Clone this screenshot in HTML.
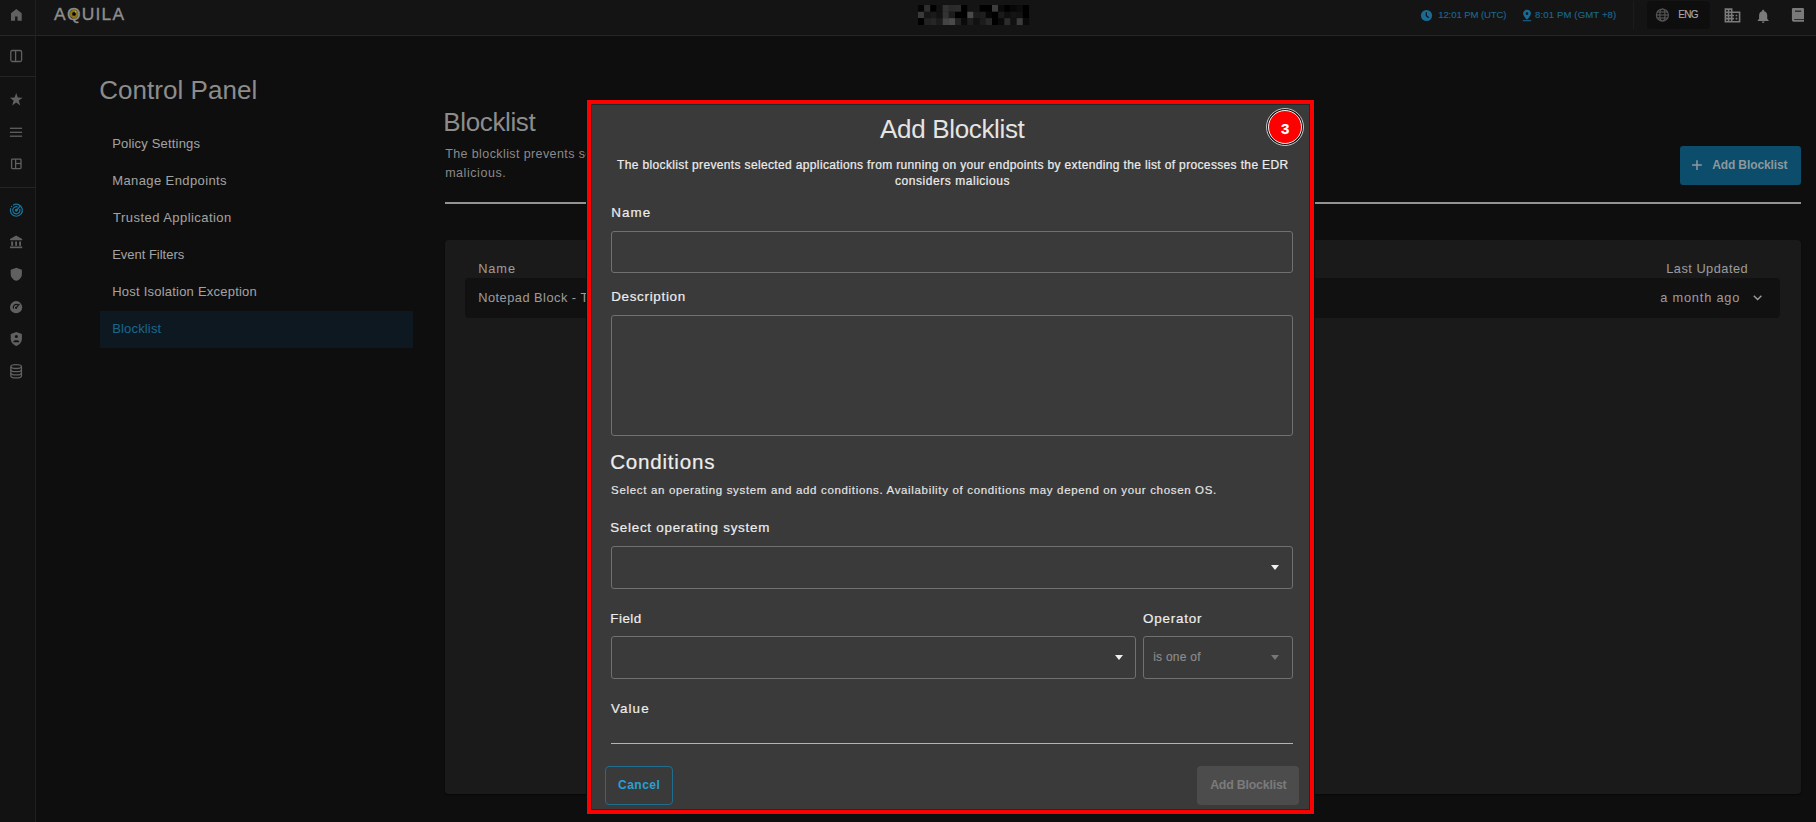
<!DOCTYPE html>
<html><head><meta charset="utf-8">
<style>
*{margin:0;padding:0;box-sizing:border-box}
html,body{width:1816px;height:822px;overflow:hidden;background:#0e0e0e;font-family:"Liberation Sans",sans-serif}
.a{position:absolute}
.t{position:absolute;white-space:nowrap;line-height:1}
#top{left:0;top:0;width:1816px;height:35px;background:#141414}
#topline{left:0;top:35px;width:1816px;height:1px;background:#262626}
#rail{left:0;top:36px;width:35px;height:786px;background:#121212}
#railline{left:35px;top:0;width:1px;height:822px;background:#202020}
.inp{border:1px solid #707070;border-radius:3px}
.caret{width:0;height:0;border-left:4.5px solid transparent;border-right:4.5px solid transparent;border-top:5px solid #f0f0f0}
.sep{left:0;width:35px;height:1px;background:#242424}
</style></head><body>
<!-- top bar -->
<div class="a" id="top"></div>
<div class="a" id="rail"></div>
<div class="a" id="topline"></div>
<div class="a" id="railline"></div>
<div class="a sep" style="top:76px"></div>
<div class="a sep" style="top:187px"></div>

<!-- logo -->

<!-- left menu -->
<div class="a" style="left:100px;top:311px;width:313px;height:37px;background:#0d1820"></div>

<!-- main -->
<div class="a" style="left:445px;top:202px;width:1356px;height:2px;background:#939393"></div>
<div class="a" style="left:1680px;top:146px;width:121px;height:39px;background:#0b4d6b;border-radius:3px"></div>

<div class="a" style="left:445px;top:240px;width:1356px;height:554px;background:#1a1a1a;border-radius:4px;box-shadow:0 1px 2px rgba(0,0,0,0.5)"></div>
<div class="a" style="left:465px;top:278px;width:1315px;height:40px;background:#111111;border-radius:4px"></div>

<div class="t" id="aq" style="left:54.05px;top:6.07px;font-size:17.4px;color:#8e8e8e;letter-spacing:1.260px;-webkit-text-stroke:0.35px #8e8e8e">AQUILA</div>
<div class="t" id="cp" style="left:99.25px;top:77.29px;font-size:26px;color:#8c8c8c;letter-spacing:0.037px">Control Panel</div>
<div class="t" id="m1" style="left:112.18px;top:136.99px;font-size:13px;color:#a2a2a2;letter-spacing:0.180px;-webkit-text-stroke:0.05px #a2a2a2">Policy Settings</div>
<div class="t" id="m2" style="left:112.21px;top:174.19px;font-size:13px;color:#a2a2a2;letter-spacing:0.396px;-webkit-text-stroke:0.05px #a2a2a2">Manage Endpoints</div>
<div class="t" id="m3" style="left:113.10px;top:211.19px;font-size:13px;color:#a2a2a2;letter-spacing:0.450px;-webkit-text-stroke:0.05px #a2a2a2">Trusted Application</div>
<div class="t" id="m4" style="left:112.18px;top:248.19px;font-size:13px;color:#a2a2a2;letter-spacing:-0.015px;-webkit-text-stroke:0.05px #a2a2a2">Event Filters</div>
<div class="t" id="m5" style="left:112.18px;top:284.99px;font-size:13px;color:#a2a2a2;letter-spacing:0.223px;-webkit-text-stroke:0.05px #a2a2a2">Host Isolation Exception</div>
<div class="t" id="m6" style="left:112.18px;top:321.99px;font-size:13px;color:#18678d;letter-spacing:0.169px;-webkit-text-stroke:0.05px #18678d">Blocklist</div>
<div class="t" id="bh" style="left:443.36px;top:109.39px;font-size:26px;color:#8c8c8c;letter-spacing:-0.383px">Blocklist</div>
<div class="t" id="d1" style="left:445.16px;top:148.32px;font-size:12.5px;color:#8a8a8a;letter-spacing:0.400px">The blocklist prevents selected applications from running on your endpoints by extending the list of processes the EDR considers</div>
<div class="t" id="d2" style="left:445.16px;top:166.62px;font-size:12.5px;color:#8a8a8a;letter-spacing:0.550px">malicious.</div>
<div class="t" id="bt" style="left:1712.14px;top:158.84px;font-size:12px;color:#8c989e;font-weight:bold;letter-spacing:-0.105px">Add Blocklist</div>
<div class="t" id="tn" style="left:478.19px;top:263.16px;font-size:12.8px;color:#9c9c9c;letter-spacing:0.900px;-webkit-text-stroke:0.05px #9c9c9c">Name</div>
<div class="t" id="tl" style="left:1666.20px;top:263.16px;font-size:12.8px;color:#9c9c9c;letter-spacing:0.491px;-webkit-text-stroke:0.05px #9c9c9c">Last Updated</div>
<div class="t" id="tr" style="left:478.19px;top:291.56px;font-size:12.8px;color:#9c9c9c;letter-spacing:0.490px;-webkit-text-stroke:0.05px #9c9c9c">Notepad Block - Test</div>
<div class="t" id="ta" style="left:1660.16px;top:291.96px;font-size:12.8px;color:#9c9c9c;letter-spacing:0.810px;-webkit-text-stroke:0.05px #9c9c9c">a month ago</div>
<!-- modal -->
<div class="a" style="left:587px;top:100px;width:727px;height:714px;border:4px solid #ff0000;background:#3a3a3a;box-shadow:0 0 0 1px #041010,inset 0 0 0 1px #1c2a2a"></div>

<div class="a inp" style="left:611px;top:231px;width:682px;height:42px"></div>
<div class="a inp" style="left:611px;top:315px;width:682px;height:121px"></div>
<div class="a inp" style="left:611px;top:546px;width:682px;height:43px"></div>
<div class="a caret" style="left:1271px;top:565px"></div>
<div class="a inp" style="left:611px;top:636px;width:525px;height:43px"></div>
<div class="a caret" style="left:1115px;top:655px"></div>
<div class="a inp" style="left:1143px;top:636px;width:150px;height:43px"></div>
<div class="a caret" style="left:1271px;top:655px;border-top-color:#777"></div>
<div class="a" style="left:611px;top:743px;width:682px;height:1px;background:#b4b4b4"></div>
<div class="a" style="left:605px;top:766px;width:68px;height:39px;border:1px solid #1f6e8f;border-radius:4px"></div>
<div class="a" style="left:1197px;top:766px;width:102px;height:39px;background:#4c4c4c;border-radius:4px"></div>
<div class="a" style="left:1266px;top:108px;width:38px;height:38px;border-radius:50%;border:1px solid #c8c8c8;background:#111"></div>
<div class="a" style="left:1268px;top:110px;width:34px;height:34px;border-radius:50%;border:1.5px solid #f2f2f2;background:#ff0000"></div>

<svg class="a" style="left:0;top:0" width="1816" height="822" viewBox="0 0 1816 822">
<g fill="#606060" stroke="none">
 <path d="M16.3 8.9 L21.7 13.3 V20.7 H17.5 V16.5 H15.1 V20.7 H11 V13.3 Z"/>
 <path d="M16.2 93 L17.8 97.6 L22.6 97.7 L18.8 100.6 L20.2 105.5 L16.2 102.6 L12.2 105.5 L13.6 100.6 L9.8 97.7 L14.6 97.6 Z"/>
 <path d="M16.1 235.4 L22.2 239 V240.3 H10 V239 Z"/>
 <rect x="11.2" y="241.5" width="1.9" height="4.3"/><rect x="15.15" y="241.5" width="1.9" height="4.3"/><rect x="19.1" y="241.5" width="1.9" height="4.3"/>
 <rect x="10" y="246.5" width="12.2" height="1.7"/>
 <path d="M16.3 267.7 L21.9 269.8 V274 C21.9 277.4 19.5 280 16.3 280.8 C13.1 280 10.7 277.4 10.7 274 V269.8 Z"/>
 <circle cx="16.1" cy="307.2" r="6.1"/>
 <path d="M16.3 332 L21.9 334.1 V338.6 C21.9 342.2 19.5 345 16.3 345.9 C13.1 345 10.7 342.2 10.7 338.6 V334.1 Z"/>
</g>
<g fill="none" stroke="#606060" stroke-width="1.3">
 <rect x="10.8" y="50.5" width="10.8" height="11" rx="1.5"/>
 <line x1="15.6" y1="50.5" x2="15.6" y2="61.5"/>
 <line x1="9.9" y1="128.3" x2="22.1" y2="128.3"/><line x1="9.9" y1="132.3" x2="22.1" y2="132.3"/><line x1="9.9" y1="136.2" x2="22.1" y2="136.2"/>
 <rect x="11.6" y="159.1" width="9.4" height="9.5" rx="0.8"/>
 <line x1="15.6" y1="159.1" x2="15.6" y2="168.6"/><line x1="15.6" y1="163.5" x2="21" y2="163.5"/>
 <ellipse cx="16.15" cy="366.6" rx="5.3" ry="1.9"/>
 <path d="M10.85 366.6 V375.9 C10.85 377 13.2 377.8 16.15 377.8 C19.1 377.8 21.45 377 21.45 375.9 V366.6"/>
 <path d="M10.85 369.8 C10.85 370.9 13.2 371.7 16.15 371.7 C19.1 371.7 21.45 370.9 21.45 369.8"/>
 <path d="M10.85 372.9 C10.85 374 13.2 374.8 16.15 374.8 C19.1 374.8 21.45 374 21.45 372.9"/>
</g>
<g fill="#121212" stroke="none">
 <circle cx="16.3" cy="336.6" r="1.5"/>
 <path d="M13.4 341.6 C13.6 339.8 19 339.8 19.2 341.6 V342.3 H13.4 Z"/>
</g>
<g stroke="#121212" stroke-width="1.2" fill="none" stroke-linecap="round">
 <path d="M13.4 308.2 A3 3 0 0 1 17.5 304.6"/>
 <line x1="16.1" y1="307.8" x2="19.2" y2="304.3"/>
</g>
<circle cx="16.1" cy="307.8" r="1.1" fill="#121212"/>
<g fill="none" stroke="#18769e" stroke-width="1.2">
 <path d="M13.09 205.22 A6 6 0 1 1 10.72 208.2"/>
 <path d="M19.74 209.02 A3.6 3.6 0 1 1 17.59 206.87"/>
 <line x1="16.36" y1="210.25" x2="20.6" y2="205.9"/>
</g>
<circle cx="11.63" cy="206.56" r="0.75" fill="#18769e"/>
<circle cx="16.36" cy="210.25" r="1.4" fill="#18769e"/>
<!-- top bar right -->
<circle cx="1426.5" cy="15.5" r="5.6" fill="#1a6a93"/>
<path d="M1426.3 12.3 V15.8 L1428.8 17.8" stroke="#141414" stroke-width="1.2" fill="none"/>
<path d="M1527 9.8 C1524.8 9.8 1523.1 11.5 1523.1 13.6 C1523.1 16.2 1527 19.8 1527 19.8 C1527 19.8 1530.9 16.2 1530.9 13.6 C1530.9 11.5 1529.2 9.8 1527 9.8 Z" fill="#1a6a93"/>
<circle cx="1527" cy="13.6" r="1.3" fill="#141414"/>
<rect x="1522.8" y="20.2" width="8.4" height="1" fill="#1a6a93"/>
<rect x="1633" y="1" width="1" height="28" fill="#1c1c1c"/>
<rect x="1647" y="1" width="63" height="28" rx="4" fill="#0e0e0e"/>
<g fill="none" stroke="#555" stroke-width="1.2">
 <circle cx="1662.4" cy="15" r="6"/>
 <ellipse cx="1662.4" cy="15" rx="2.6" ry="6"/>
 <line x1="1656.4" y1="15" x2="1668.4" y2="15"/>
 <line x1="1657.2" y1="12" x2="1667.6" y2="12"/>
 <line x1="1657.2" y1="18" x2="1667.6" y2="18"/>
</g>
<g fill="#7a7a7a">
 <path transform="translate(1723 6.0) scale(0.79)" d="M12 7V3H2v18h20V7H12zM6 19H4v-2h2v2zm0-4H4v-2h2v2zm0-4H4V9h2v2zm0-4H4V5h2v2zm4 12H8v-2h2v2zm0-4H8v-2h2v2zm0-4H8V9h2v2zm0-4H8V5h2v2zm10 12h-8v-2h2v-2h-2v-2h2v-2h-2V9h8v10zm-2-8h-2v2h2v-2zm0 4h-2v2h2v-2z"/>
 <path transform="translate(1755 8) scale(0.68)" d="M12 22c1.1 0 2-.9 2-2h-4c0 1.1.89 2 2 2zm6-6v-5c0-3.07-1.64-5.64-4.5-6.32V4c0-.83-.67-1.5-1.5-1.5s-1.5.67-1.5 1.5v.68C7.63 5.36 6 7.92 6 11v5l-2 2v1h16v-1l-2-2z"/>
 <path d="M1793.2 8 H1802.8 A1.2 1.2 0 0 1 1804 9.2 V19.2 H1794.3 A0.9 0.9 0 0 0 1794.3 20.1 H1804 V21.8 H1793.6 A1.7 1.7 0 0 1 1791.9 20.1 V9.3 A1.3 1.3 0 0 1 1793.2 8 Z"/>
</g>
<rect x="1795" y="10.6" width="6.2" height="1.1" fill="#141414"/>
<rect x="918.00" y="5" width="6.22" height="6.80" fill="#050505"/>
<rect x="924.17" y="5" width="6.22" height="6.80" fill="#2e2e2e"/>
<rect x="930.33" y="5" width="6.22" height="6.80" fill="#000000"/>
<rect x="936.50" y="5" width="6.22" height="6.80" fill="#121212"/>
<rect x="942.67" y="5" width="6.22" height="6.80" fill="#333333"/>
<rect x="948.83" y="5" width="6.22" height="6.80" fill="#2a2a2a"/>
<rect x="955.00" y="5" width="6.22" height="6.80" fill="#2c2c2c"/>
<rect x="961.17" y="5" width="6.22" height="6.80" fill="#000000"/>
<rect x="967.33" y="5" width="6.22" height="6.80" fill="#141414"/>
<rect x="973.50" y="5" width="6.22" height="6.80" fill="#141414"/>
<rect x="979.67" y="5" width="6.22" height="6.80" fill="#000000"/>
<rect x="985.83" y="5" width="6.22" height="6.80" fill="#000000"/>
<rect x="992.00" y="5" width="6.22" height="6.80" fill="#3c3c3c"/>
<rect x="998.17" y="5" width="6.22" height="6.80" fill="#0a0a0a"/>
<rect x="1004.33" y="5" width="6.22" height="6.80" fill="#000000"/>
<rect x="1010.50" y="5" width="6.22" height="6.80" fill="#070707"/>
<rect x="1016.67" y="5" width="6.22" height="6.80" fill="#0c0c0c"/>
<rect x="1022.83" y="5" width="6.22" height="6.80" fill="#000000"/>
<rect x="918.00" y="11.8" width="6.22" height="6.40" fill="#3a3a3a"/>
<rect x="924.17" y="11.8" width="6.22" height="6.40" fill="#161616"/>
<rect x="930.33" y="11.8" width="6.22" height="6.40" fill="#1a1a1a"/>
<rect x="936.50" y="11.8" width="6.22" height="6.40" fill="#121212"/>
<rect x="942.67" y="11.8" width="6.22" height="6.40" fill="#333333"/>
<rect x="948.83" y="11.8" width="6.22" height="6.40" fill="#1c1c1c"/>
<rect x="955.00" y="11.8" width="6.22" height="6.40" fill="#000000"/>
<rect x="961.17" y="11.8" width="6.22" height="6.40" fill="#000000"/>
<rect x="967.33" y="11.8" width="6.22" height="6.40" fill="#4a4a4a"/>
<rect x="973.50" y="11.8" width="6.22" height="6.40" fill="#1c1c1c"/>
<rect x="979.67" y="11.8" width="6.22" height="6.40" fill="#1e1e1e"/>
<rect x="985.83" y="11.8" width="6.22" height="6.40" fill="#070707"/>
<rect x="992.00" y="11.8" width="6.22" height="6.40" fill="#000000"/>
<rect x="998.17" y="11.8" width="6.22" height="6.40" fill="#1a1a1a"/>
<rect x="1004.33" y="11.8" width="6.22" height="6.40" fill="#0e0e0e"/>
<rect x="1010.50" y="11.8" width="6.22" height="6.40" fill="#141414"/>
<rect x="1016.67" y="11.8" width="6.22" height="6.40" fill="#121212"/>
<rect x="1022.83" y="11.8" width="6.22" height="6.40" fill="#000000"/>
<rect x="918.00" y="18.2" width="6.22" height="6.80" fill="#000000"/>
<rect x="924.17" y="18.2" width="6.22" height="6.80" fill="#222222"/>
<rect x="930.33" y="18.2" width="6.22" height="6.80" fill="#262626"/>
<rect x="936.50" y="18.2" width="6.22" height="6.80" fill="#1c1c1c"/>
<rect x="942.67" y="18.2" width="6.22" height="6.80" fill="#444444"/>
<rect x="948.83" y="18.2" width="6.22" height="6.80" fill="#4a4a4a"/>
<rect x="955.00" y="18.2" width="6.22" height="6.80" fill="#222222"/>
<rect x="961.17" y="18.2" width="6.22" height="6.80" fill="#0a0a0a"/>
<rect x="967.33" y="18.2" width="6.22" height="6.80" fill="#1e1e1e"/>
<rect x="973.50" y="18.2" width="6.22" height="6.80" fill="#111111"/>
<rect x="979.67" y="18.2" width="6.22" height="6.80" fill="#1c1c1c"/>
<rect x="985.83" y="18.2" width="6.22" height="6.80" fill="#282828"/>
<rect x="992.00" y="18.2" width="6.22" height="6.80" fill="#000000"/>
<rect x="998.17" y="18.2" width="6.22" height="6.80" fill="#0a0a0a"/>
<rect x="1004.33" y="18.2" width="6.22" height="6.80" fill="#2c2c2c"/>
<rect x="1010.50" y="18.2" width="6.22" height="6.80" fill="#111111"/>
<rect x="1016.67" y="18.2" width="6.22" height="6.80" fill="#3c3c3c"/>
<rect x="1022.83" y="18.2" width="6.22" height="6.80" fill="#0a0a0a"/>
<!-- logo eye -->
<circle cx="73.95" cy="13.95" r="4.3" fill="#8a7412"/>
<circle cx="74" cy="13.9" r="1.9" fill="#050505"/><circle cx="75.6" cy="11.8" r="0.6" fill="#cfcfcf"/>
<!-- table chevron -->
<path d="M1753.8 295.8 L1757.6 299.6 L1761.4 295.8" fill="none" stroke="#9c9c9c" stroke-width="1.4"/>
<!-- plus -->
<path d="M1697 160.2 V169.9 M1692.1 165 H1701.8" stroke="#8e9aa0" stroke-width="1.5"/>
</svg>

<div class="t" id="mt" style="left:880.10px;top:116.09px;font-size:26px;color:#e4e4e4;letter-spacing:-0.345px">Add Blocklist</div>
<div class="t" id="md1" style="left:617.05px;top:158.84px;font-size:12px;color:#ececec;letter-spacing:0.354px;-webkit-text-stroke:0.22px #ececec">The blocklist prevents selected applications from running on your endpoints by extending the list of processes the EDR</div>
<div class="t" id="md2" style="left:895.08px;top:174.74px;font-size:12px;color:#ececec;letter-spacing:0.540px;-webkit-text-stroke:0.22px #ececec">considers malicious</div>
<div class="t" id="ln" style="left:611.17px;top:205.85px;font-size:13.4px;color:#ededed;letter-spacing:1.110px;-webkit-text-stroke:0.2px #ededed">Name</div>
<div class="t" id="ld" style="left:611.15px;top:290.35px;font-size:13.4px;color:#ededed;letter-spacing:0.711px;-webkit-text-stroke:0.2px #ededed">Description</div>
<div class="t" id="lc" style="left:610.20px;top:452.26px;font-size:20.6px;color:#ededed;letter-spacing:0.770px;-webkit-text-stroke:0.2px #ededed">Conditions</div>
<div class="t" id="ls" style="left:611.10px;top:484.56px;font-size:11.5px;color:#e6e6e6;letter-spacing:0.664px;-webkit-text-stroke:0.15px #e6e6e6">Select an operating system and add conditions. Availability of conditions may depend on your chosen OS.</div>
<div class="t" id="lo" style="left:610.20px;top:521.15px;font-size:13.4px;color:#ededed;letter-spacing:0.736px;-webkit-text-stroke:0.2px #ededed">Select operating system</div>
<div class="t" id="lf" style="left:610.20px;top:611.95px;font-size:13.4px;color:#ededed;letter-spacing:0.518px;-webkit-text-stroke:0.2px #ededed">Field</div>
<div class="t" id="lop" style="left:1143.08px;top:611.65px;font-size:13.4px;color:#ededed;letter-spacing:0.784px;-webkit-text-stroke:0.2px #ededed">Operator</div>
<div class="t" id="io" style="left:1153.17px;top:650.84px;font-size:12px;color:#8c8c8c;letter-spacing:0.247px;-webkit-text-stroke:0.15px #8c8c8c">is one of</div>
<div class="t" id="lv" style="left:611.10px;top:702.25px;font-size:13.4px;color:#ededed;letter-spacing:1.057px;-webkit-text-stroke:0.2px #ededed">Value</div>
<div class="t" id="cn" style="left:618.09px;top:779.04px;font-size:12px;color:#2a9fd4;font-weight:bold;letter-spacing:0.468px">Cancel</div>
<div class="t" id="ab" style="left:1210.14px;top:778.60px;font-size:12.4px;color:#7b7b7b;font-weight:bold;letter-spacing:-0.218px">Add Blocklist</div>
<div class="t" id="b3" style="left:1281.07px;top:121.30px;font-size:15px;color:#ffffff;font-weight:bold;-webkit-text-stroke:0.25px #ffffff">3</div>
<div class="t" id="t1" style="left:1438.17px;top:10.07px;font-size:9.6px;color:#1a6990;letter-spacing:-0.111px;-webkit-text-stroke:0.12px #1a6990">12:01 PM (UTC)</div>
<div class="t" id="t2" style="left:1535.08px;top:10.07px;font-size:9.6px;color:#1a6990;letter-spacing:0.108px;-webkit-text-stroke:0.12px #1a6990">8:01 PM (GMT +8)</div>
<div class="t" id="en" style="left:1678.20px;top:9.63px;font-size:10px;color:#a8a8a8;letter-spacing:-0.630px;-webkit-text-stroke:0.15px #a8a8a8">ENG</div>
</body></html>
